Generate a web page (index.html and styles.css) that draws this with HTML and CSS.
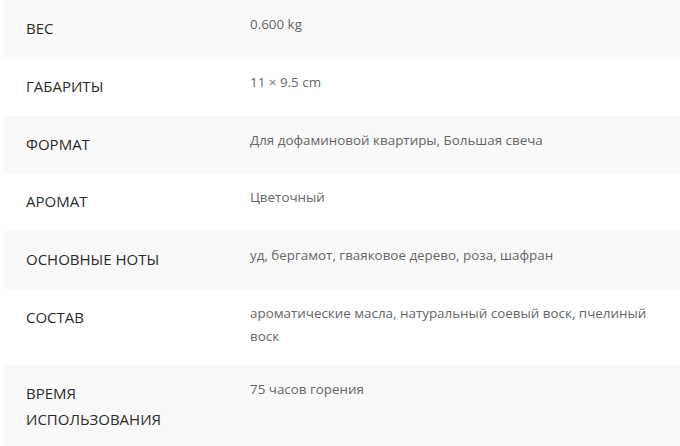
FILE: index.html
```html
<!DOCTYPE html>
<html lang="ru">
<head>
<meta charset="utf-8">
<link rel="stylesheet" href="styles.css">
</head>
<body>
<div class="specs">
  <div class="row alt"><div class="label">ВЕС</div><div class="value">0.600 kg</div></div>
  <div class="row"><div class="label">ГАБАРИТЫ</div><div class="value">11 × 9.5 cm</div></div>
  <div class="row alt"><div class="label">ФОРМАТ</div><div class="value">Для дофаминовой квартиры, Большая свеча</div></div>
  <div class="row"><div class="label">АРОМАТ</div><div class="value">Цветочный</div></div>
  <div class="row alt"><div class="label">ОСНОВНЫЕ НОТЫ</div><div class="value">уд, бергамот, гваяковое дерево, роза, шафран</div></div>
  <div class="row"><div class="label">СОСТАВ</div><div class="value">ароматические масла, натуральный соевый воск, пчелиный воск</div></div>
  <div class="row alt"><div class="label">ВРЕМЯ ИСПОЛЬЗОВАНИЯ</div><div class="value">75 часов горения</div></div>
</div>
</body>
</html>
```

FILE: styles.css
```css
html, body {
  margin: 0;
  padding: 0;
  background: #ffffff;
  overflow: hidden;
}
body {
  padding-left: 3px;
  font-family: "Open Sans", "Noto Sans", sans-serif;
}
.specs {
  width: 680px;
}
.row {
  display: grid;
  grid-template-columns: 247px 1fr;
  align-items: start;
  background: #ffffff;
}
.row.alt {
  background: #f9f9f9;
}
.label {
  padding: 15px 40px 16.75px 23px;
  font-size: 15px;
  line-height: 26px;
  color: #2b2b2b;
  text-transform: uppercase;
}
.value {
  padding: 13px 30px 17px 0;
  font-size: 13.4px;
  line-height: 23px;
  color: #666666;
}
```
